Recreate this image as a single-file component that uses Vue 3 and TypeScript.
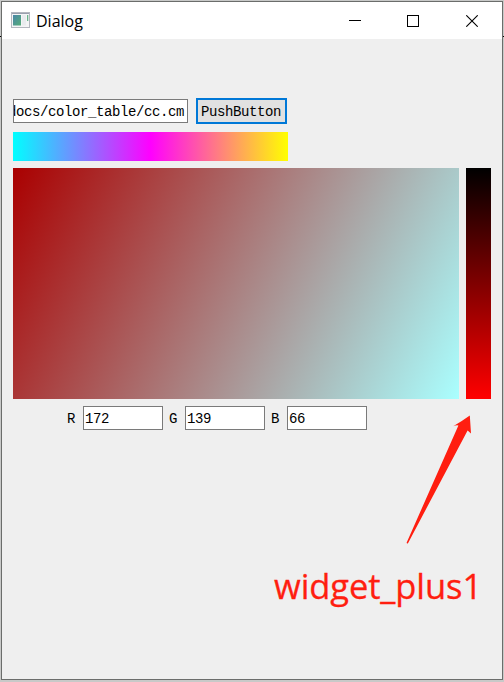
<script setup lang="ts">
import { ref } from 'vue'

interface Channel {
  name: string
  value: number
}

const filePath = ref<string>('docs/color_table/cc.cm')
const channels = ref<Channel[]>([
  { name: 'R', value: 172 },
  { name: 'G', value: 139 },
  { name: 'B', value: 66 },
])
</script>

<template>
  <div class="desktop">
    <div class="dialog">
      <header class="titlebar">
        <svg class="app-icon" width="19" height="16" viewBox="0 0 19 16">
          <defs>
            <linearGradient id="pane" x1="0" y1="0" x2="1" y2="1">
              <stop offset="0" stop-color="#4a86a8" />
              <stop offset="1" stop-color="#55ad78" />
            </linearGradient>
          </defs>
          <rect x="0.5" y="0.5" width="18" height="15" fill="#f4f5f6" stroke="#b4b7bf" />
          <path d="M1 1.5H18" stroke="#9aa0ae" />
          <rect x="2" y="3" width="8" height="10.5" fill="url(#pane)" />
          <rect x="11" y="3" width="4" height="10.5" fill="#e9ecee" />
          <rect x="16" y="3" width="1.3" height="6" fill="#6bb58b" />
        </svg>
        <span class="title">Dialog</span>
        <div class="controls">
          <svg width="12" height="12" viewBox="0 0 12 12"><path d="M0 5.5H12" stroke="#000" /></svg>
          <svg width="12" height="12" viewBox="0 0 12 12"><rect x="0.5" y="0.5" width="11" height="11" fill="none" stroke="#000" /></svg>
          <svg class="close" width="12" height="12" viewBox="0 0 12 12"><path d="M0.3 0.3L11.7 11.7M11.7 0.3L0.3 11.7" stroke="#000" stroke-width="1.1" /></svg>
        </div>
      </header>

      <main class="body">
        <div class="file-row">
          <div class="field path"><span>{{ filePath }}</span></div>
          <button class="push" type="button">PushButton</button>
        </div>
        <div class="hue"></div>
        <div class="pickers">
          <div class="plane"></div>
          <div class="strip"></div>
        </div>
        <div class="channels">
          <div v-for="c in channels" :key="c.name" class="channel">
            <span class="name">{{ c.name }}</span>
            <div class="field value">{{ c.value }}</div>
          </div>
        </div>
      </main>
    </div>

    <svg class="arrow" width="66" height="130" viewBox="0 0 66 130">
      <path d="M63.8 0.5L65 18.4L61.6 15.4L2 128.2Q1 129.2 0.6 127.8L52.4 10.4Q50 10 47.2 11.2Q57 5.5 63.8 0.5Z" fill="#ff1e10" />
    </svg>
    <div class="note">widget_plus1</div>
  </div>
</template>

<style>
body {
  margin: 0;
  overflow: hidden;
}
</style>

<style scoped>
.desktop {
  position: relative;
  box-sizing: border-box;
  width: 504px;
  height: 682px;
  padding: 1px 1px 2px;
  background: linear-gradient(#000, #000) 0 36px / 504px 1px no-repeat, #c8c9c8;
}
.dialog {
  box-sizing: border-box;
  width: 502px;
  height: 679px;
  border: 1px solid #6b6d6b;
  background: #efefef;
}
.titlebar {
  display: flex;
  align-items: center;
  box-sizing: border-box;
  height: 37px;
  padding-left: 9px;
  background: #fff;
}
.app-icon {
  display: block;
  margin-top: -1px;
}
.title {
  margin-left: 6px;
  font: 16px/20px "Open Sans", "Noto Sans", sans-serif;
  color: #000;
}
.controls {
  display: flex;
  gap: 46px;
  margin-left: auto;
  margin-right: 24px;
}
.controls svg {
  display: block;
}
.controls .close {
  margin-left: 1px;
}
.body {
  padding: 59px 11px 0;
  font: 14px/16px "Liberation Mono", monospace;
  letter-spacing: -0.4px;
  color: #000;
}
.file-row {
  display: flex;
  align-items: center;
  gap: 8px;
  height: 26px;
}
.field {
  display: flex;
  align-items: center;
  box-sizing: border-box;
  height: 24px;
  border: 1px solid #7a7a7a;
  background: #fff;
  padding-top: 2px;
}
.path {
  justify-content: flex-end;
  width: 175px;
  padding-right: 3px;
  overflow: hidden;
  white-space: nowrap;
}
.path span {
  flex: none;
}
.push {
  box-sizing: border-box;
  width: 91px;
  height: 26px;
  padding: 2px 1px 0 0;
  border: 2px solid #0078d7;
  background: #e1e1e1;
  font: inherit;
  letter-spacing: inherit;
  color: inherit;
}
.hue {
  width: 275px;
  height: 29px;
  margin-top: 8px;
  background: linear-gradient(90deg, #00ffff, #ff00ff 50%, #ffff00);
}
.pickers {
  display: flex;
  gap: 7px;
  height: 231px;
  margin-top: 7px;
}
.plane {
  width: 446px;
  background: linear-gradient(117.4deg, #aa0000, #aaffff);
}
.strip {
  width: 25px;
  background: linear-gradient(#000, #f00);
}
.channels {
  display: flex;
  gap: 6px;
  margin: 7px 0 0 54px;
}
.channel {
  display: flex;
  align-items: center;
}
.name {
  width: 16px;
  padding-top: 2px;
}
.value {
  width: 80px;
  padding-left: 1px;
}
.arrow {
  position: absolute;
  left: 406px;
  top: 415px;
}
.note {
  position: absolute;
  left: 274px;
  top: 562px;
  font: 34.5px/48px "Open Sans", "Noto Sans", sans-serif;
  letter-spacing: -0.1px;
  color: #ff1e10;
  -webkit-text-stroke: 0.3px #ff1e10;
  white-space: nowrap;
}
</style>
